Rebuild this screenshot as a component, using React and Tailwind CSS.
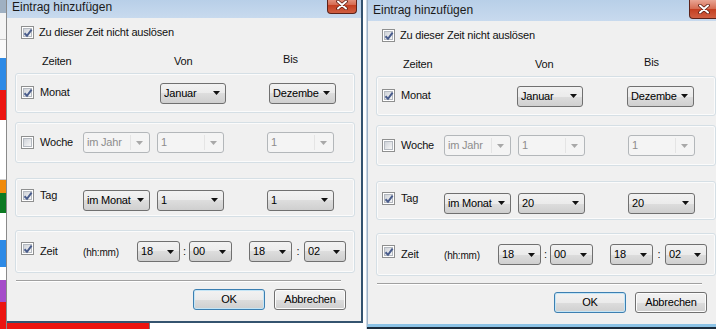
import React from 'react'

const FONT = "font-['Liberation_Sans',Arial,sans-serif]"

const STRIP = [
  ['h-[13px]', 'bg-[#9fb0c2]'],
  ['h-[27px]', 'bg-[#f4f4f4] border-b border-[#c8c8c8]'],
  ['h-[18px]', 'bg-[#fafafa]'],
  ['h-[32px]', 'bg-[#2d8ae6]'],
  ['h-[30px]', 'bg-[#ec1410]'],
  ['h-[60px]', 'bg-white border-b border-[#d0d0d0]'],
  ['h-[13px]', 'bg-[#f08a0a]'],
  ['h-[20px]', 'bg-[#0b7a22]'],
  ['h-[27px]', 'bg-white'],
  ['h-[27px]', 'bg-[#2d8ae6]'],
  ['h-[13px]', 'bg-white'],
  ['h-[22px]', 'bg-[#a54cc9]'],
  ['h-[27px]', 'bg-[#ec1410]'],
]

function Check({ checked, className = '' }) {
  return (
    <span className={`w-[13px] h-[13px] shrink-0 border border-[#8e8f8f] bg-white p-[1px] flex relative ${className}`}>
      <span className="flex-1 border border-[#b4b9c0] bg-[linear-gradient(135deg,#cfd3d9,#f7f7f7)]" />
      {checked && (
        <svg className="absolute left-[1px] top-[1px]" width="10" height="10" viewBox="0 0 10 10">
          <path d="M1.5 5.2 L4 7.8 L8.6 1.6" fill="none" stroke="#4a5d8c" strokeWidth="2" />
        </svg>
      )}
    </span>
  )
}

function Arrow({ color }) {
  return (
    <svg width="7" height="4" viewBox="0 0 7 4" className="shrink-0">
      <polygon points="0,0 7,0 3.5,4" fill={color} />
    </svg>
  )
}

function Combo({ value, w, disabled, className = '' }) {
  if (disabled) {
    return (
      <div className={`${w} h-[21px] shrink-0 rounded-[3px] border border-[#b3b7ba] bg-[#f4f4f4] flex items-center pl-[3px] pr-[6px] text-[#8d8d8d] ${className}`}>
        <span className="flex-1 truncate">{value}</span>
        <span className="w-px h-[15px] bg-[#e4e4e4] mr-[5px]" />
        <Arrow color="#a8a8a8" />
      </div>
    )
  }
  return (
    <div className={`${w} h-[21px] shrink-0 rounded-[3px] border border-[#707070] bg-[linear-gradient(#f2f2f2,#ebebeb_50%,#dddddd_50%,#cfcfcf)] flex items-center pl-[3px] pr-[5px] text-black ${className}`}>
      <span className="flex-1 truncate">{value}</span>
      <Arrow color="#111" />
    </div>
  )
}

function Label({ children, className = '' }) {
  return <span className={`leading-[13px] ${className}`}>{children}</span>
}

function TitleBar({ h, pt, closeH }) {
  return (
    <div className={`${h} ${pt} flex items-start pl-[5px] bg-[linear-gradient(#b8cfe8,#c8daee)] shrink-0`}>
      <span className="text-[12px] leading-[14px] tracking-normal text-[#1a1a1a]">Eintrag hinzufügen</span>
      <div className={`ml-auto mr-[4px] -mt-[3px] w-[30px] ${closeH} rounded-b-[4px] border border-t-0 border-[#5c2219] bg-[linear-gradient(#e9a593,#d56a50_50%,#c33d1f_50%,#d05f42)] flex items-center justify-center`}>
        <svg width="12" height="10" viewBox="0 0 12 10">
          <path d="M2 1.5 L10 8.5 M10 1.5 L2 8.5" stroke="#5b1c12" strokeWidth="3.6" strokeLinecap="round" />
          <path d="M2 1.5 L10 8.5 M10 1.5 L2 8.5" stroke="#ffffff" strokeWidth="2" strokeLinecap="round" />
        </svg>
      </div>
    </div>
  )
}

function Group({ h, className = '', children }) {
  return (
    <div className={`ml-[8px] w-[340px] ${h} shrink-0 rounded-[3px] border border-[#d5dfe5] shadow-[inset_0_0_0_1px_#fbfbfb] flex items-center pl-[5px] ${className}`}>
      {children}
    </div>
  )
}

function Dialog({ day, tall }) {
  return (
    <div className={`w-[356px] shrink-0 flex flex-col bg-[#f0f0f0] ${tall ? 'h-[327px] border-l border-[#9fb2c6] border-b-[3px] border-b-[#8cc3e6]' : 'h-[323px] border-r-2 border-b-2 border-[#34536f]'}`}>
      <TitleBar h={tall ? 'h-[21px]' : 'h-[18px]'} pt={tall ? 'pt-[3px]' : 'pt-0'} closeH={tall ? 'h-[19px]' : 'h-[17px]'} />

      <div className="flex items-center gap-[5px] pl-[14px] mt-[8px] h-[13px]">
        <Check checked />
        <Label>Zu dieser Zeit nicht auslösen</Label>
      </div>

      <div className="flex items-start pl-[35px] mt-[16px] h-[13px]">
        <Label className="w-[132px]">Zeiten</Label>
        <Label className="w-[109px]">Von</Label>
        <Label className="-mt-[2px]">Bis</Label>
      </div>

      <Group h="h-[40px]" className="mt-[5px]">
        <div className="w-[62px] flex items-center gap-[6px] mb-[2px]">
          <Check checked />
          <Label>Monat</Label>
        </div>
        <Combo value="Januar" w="w-[66px]" className={tall ? 'ml-[73px]' : 'ml-[77px]'} />
        <Combo value="Dezembe" w="w-[67px]" className={tall ? 'ml-[44px]' : 'ml-[43px]'} />
      </Group>

      <Group h="h-[41px]" className="mt-[9px]">
        <div className="w-[62px] flex items-center gap-[6px]">
          <Check />
          <Label>Woche</Label>
        </div>
        <Combo value="im Jahr" w="w-[67px]" disabled />
        <Combo value="1" w="w-[67px]" className="ml-[7px]" disabled />
        <Combo value="1" w="w-[67px]" className="ml-[43px]" disabled />
      </Group>

      <Group h="h-[39px]" className="mt-[15px]">
        <div className="w-[62px] flex items-center gap-[6px] mb-[5px]">
          <Check checked />
          <Label>Tag</Label>
        </div>
        <Combo value="im Monat" w="w-[67px]" className="mt-[5px]" />
        <Combo value={day} w="w-[67px]" className="ml-[7px] mt-[5px]" />
        <Combo value={day} w="w-[67px]" className="ml-[43px] mt-[5px]" />
      </Group>

      <Group h="h-[43px]" className="mt-[13px]">
        <div className="w-[62px] flex items-center gap-[6px]">
          <Check checked className="mb-[6px]" />
          <Label className="mb-[1px]">Zeit</Label>
        </div>
        <span className="w-[54px] text-[10px] leading-[12px] mt-[2px]">(hh:mm)</span>
        <Combo value="18" w="w-[43px]" />
        <span className="w-[9px] text-center leading-[13px]">:</span>
        <Combo value="00" w="w-[43px]" />
        <Combo value="18" w="w-[43px]" className="ml-[17px]" />
        <span className="w-[12px] text-center leading-[13px]">:</span>
        <Combo value="02" w="w-[42px]" />
      </Group>

      <div className="ml-[9px] w-[325px] mt-[7px] h-[2px] border-t border-[#a0a0a0] border-b border-b-white" />

      <div className="flex mt-[7px] pl-[186px] gap-[9px]">
        <button className="w-[72px] h-[21px] rounded-[3px] border border-[#3c7fb1] shadow-[inset_0_0_0_1px_#c4e5f6] bg-[linear-gradient(#f2f2f2,#ebebeb_50%,#dddddd_50%,#cfcfcf)] text-[11px] leading-[13px] text-black">
          OK
        </button>
        <button className="w-[72px] h-[21px] rounded-[3px] border border-[#707070] shadow-[inset_0_0_0_1px_#fcfcfc] bg-[linear-gradient(#f2f2f2,#ebebeb_50%,#dddddd_50%,#cfcfcf)] text-[11px] leading-[13px] text-black">
          Abbrechen
        </button>
      </div>
    </div>
  )
}

export default function App() {
  return (
    <div className={`w-[716px] h-[329px] overflow-hidden flex items-start bg-white text-[11px] tracking-[-0.2px] text-[#111] ${FONT}`}>
      <div className="w-[7px] shrink-0 flex flex-col border-r border-[#8a8a8a]">
        {STRIP.map(([h, c], i) => (
          <div key={i} className={`${h} ${c}`} />
        ))}
      </div>

      <div className="w-[356px] shrink-0 flex flex-col">
        <Dialog day="1" />
        <div className="h-[6px] flex">
          <div className="w-[143px] bg-[#ec1410] border-r border-[#7a7a7a]" />
          <div className="flex-1 bg-white" />
        </div>
      </div>

      <div className="w-[4px] h-[329px] shrink-0 bg-white border-r border-[#c9d7e4]" />

      <div className="shrink-0 flex flex-col bg-[#1c2c3c] h-[329px]">
        <Dialog day="20" tall />
      </div>
    </div>
  )
}
